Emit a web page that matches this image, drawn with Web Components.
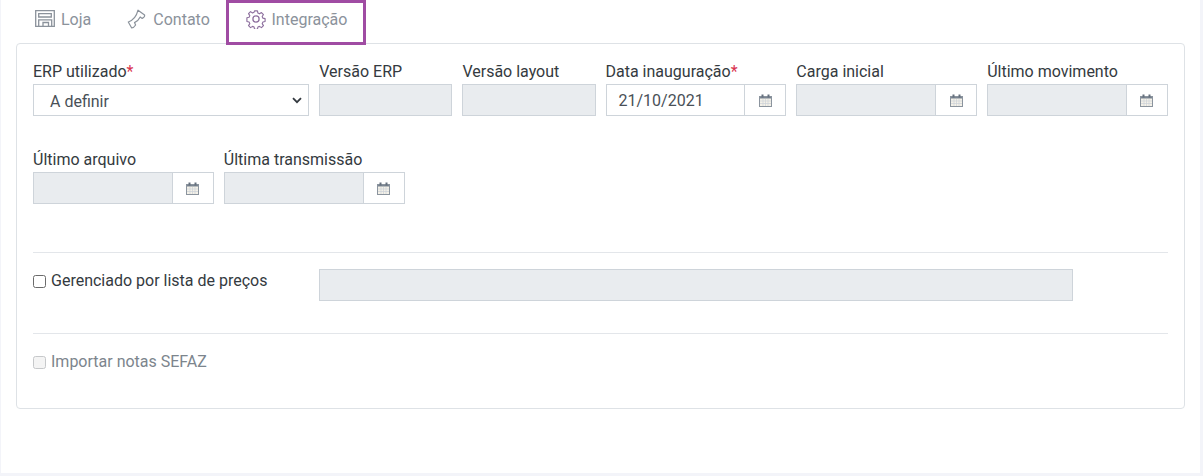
<!DOCTYPE html>
<html lang="pt-BR">
<head>
<meta charset="utf-8">
<title>Integração</title>
<style>
	html, body { margin: 0; height: 100% }
	body {
		background: #f3f4f9;
		font: 16px/20px Roboto, "Liberation Sans", sans-serif;
		color: #343a40;
	}
</style>
</head>
<body>
<app-panel>
	<tab-bar>
		<nav-tab icon="store">Loja</nav-tab>
		<nav-tab icon="phone">Contato</nav-tab>
		<nav-tab icon="gear" active>Integração</nav-tab>
	</tab-bar>
	<form-card>
		<form-row>
			<form-field span="25" required label="ERP utilizado"><select-input value="A definir"></select-input></form-field>
			<form-field span="12.5" label="Versão ERP"><text-input></text-input></form-field>
			<form-field span="12.5" label="Versão layout"><text-input></text-input></form-field>
			<form-field span="16.6667" required label="Data inauguração"><date-input value="21/10/2021" enabled></date-input></form-field>
			<form-field span="16.6667" label="Carga inicial"><date-input></date-input></form-field>
			<form-field span="16.6667" label="Último movimento"><date-input></date-input></form-field>
		</form-row>
		<form-row class="second">
			<form-field span="16.6667" label="Último arquivo"><date-input></date-input></form-field>
			<form-field span="16.6667" label="Última transmissão"><date-input></date-input></form-field>
		</form-row>
		<form-rule style="margin-top:48px"></form-rule>
		<form-row style="margin-top:16px">
			<form-field span="25"><check-box>Gerenciado por lista de preços</check-box></form-field>
			<form-field span="66.6667"><text-input></text-input></form-field>
		</form-row>
		<form-rule style="margin-top:32px"></form-rule>
		<form-row style="margin-top:16px">
			<form-field span="25"><check-box disabled>Importar notas SEFAZ</check-box></form-field>
		</form-row>
	</form-card>
</app-panel>

<script>
////////////////////////////////////////////////////////////////
const ICONS = {
	store: `<svg width="22" height="20" viewBox="0 0 22 20" fill="none" stroke="#8b929b" stroke-width="1.300">
		<path d="M1.700 1.700h18.600v15.600H1.700z"/>
		<path d="M4.700 4.700h12.600v3.300H4.700z"/>
		<path d="M4.700 17.300V10.800h13v6.500M9 17.300v-3.800h5.500v3.800" />
	</svg>`
,	phone: `<svg width="20" height="20" viewBox="0 0 20 20" fill="none" stroke="#8b929b" stroke-width="1.200" stroke-linejoin="round" stroke-linecap="round">
		<path d="M11 1.200L17.600 6c.3 1.200-.8 2.600-2.400 3.400L13.200 8C12 10.500 10.200 12.300 7.500 13.600L8.600 16C7.600 17.600 6.200 18.800 4.700 19L1.300 13C5.800 11.500 9.600 7 11 1.200z"/>
	</svg>`
,	gear: `<svg width="20" height="20" viewBox="0 0 20 20" fill="none" stroke="#8d6f9e" stroke-width="1.250" stroke-linejoin="round">
		<circle cx="10" cy="10" r="3.100"/>
		<path d="M8.400 1h3.200l.5 2.500 1.700.8 2.200-1.400 2.200 2.200-1.400 2.200.8 1.800 2.400.5v3.200l-2.400.5-.8 1.800 1.400 2.200-2.200 2.200-2.200-1.400-1.700.7-.5 2.500H8.400l-.5-2.500-1.700-.7-2.200 1.400-2.200-2.200 1.400-2.200-.8-1.800-2.400-.5V8.600l2.400-.5.8-1.800-1.400-2.200 2.200-2.200 2.200 1.400 1.700-.8z" transform="translate(.9 .9) scale(.91)"/>
	</svg>`
,	calendar: `<svg width="13" height="13" viewBox="0 0 13 13">
		<rect x=".5" y="2.500" width="12" height="10" fill="#f4f1e8" stroke="#8b949e"/>
		<rect x="1" y="3" width="11" height="1.500" fill="#7a8592"/>
		<rect x="2.500" y=".5" width="2" height="3" fill="#66717e"/>
		<rect x="8.500" y=".5" width="2" height="3" fill="#66717e"/>
		<path d="M1 7h11M1 9.500h11M4 5v7M6.500 5v7M9 5v7" stroke="#ccd1d9" stroke-width=".7"/>
	</svg>`
}

const Shadow = ( el, html ) => el.attachShadow( { mode: 'open' } ).innerHTML = html

class AppPanel extends HTMLElement {
	constructor() {
		super()
		Shadow( this, `
			<style>
				:host {
					display: block;
					box-sizing: border-box;
					width: 1199px;
					height: 473px;
					margin-left: 1px;
					padding: 0 15px;
					background: #fff;
				}
			</style>
			<slot></slot>
		` )
	}
}
customElements.define( 'app-panel', AppPanel )

class TabBar extends HTMLElement {
	constructor() {
		super()
		Shadow( this, `
			<style>
				:host { display: flex; height: 43px }
			</style>
			<slot></slot>
		` )
	}
}
customElements.define( 'tab-bar', TabBar )

class NavTab extends HTMLElement {
	constructor() {
		super()
		Shadow( this, `
			<style>
				:host {
					display: flex;
					align-items: center;
					gap: 5px;
					box-sizing: border-box;
					height: 40px;
					padding: 0 18px;
					color: #8b929b;
					position: relative;
				}
				:host([icon="phone"]) { padding: 0 16.7px 0 18px; gap: 6px }
				:host([active]) {
					height: 45px;
					padding: 0 16px 5px 17px;
					gap: 5px;
					border: 3px solid #a04ca3;
					background: #fff;
					z-index: 1;
				}
				.icon { display: block; margin-top: -2px }
				svg { display: block }
			</style>
			<span class="icon">${ ICONS[ this.getAttribute( 'icon' ) ] }</span>
			<slot></slot>
		` )
	}
}
customElements.define( 'nav-tab', NavTab )

class FormCard extends HTMLElement {
	constructor() {
		super()
		Shadow( this, `
			<style>
				:host {
					display: block;
					box-sizing: border-box;
					height: 366px;
					padding: 16px;
					border: 1px solid #dee2e6;
					border-radius: 4px;
					background: #fff;
				}
			</style>
			<slot></slot>
		` )
	}
}
customElements.define( 'form-card', FormCard )

class FormRow extends HTMLElement {
	constructor() {
		super()
		Shadow( this, `
			<style>
				:host { display: flex; flex-wrap: wrap; margin: 0 -5px }
				:host(.second) { margin-top: 32px }
			</style>
			<slot></slot>
		` )
	}
}
customElements.define( 'form-row', FormRow )

class FormRule extends HTMLElement {
	constructor() {
		super()
		Shadow( this, `<style>:host { display: block; height: 1px; background: #e3e6ea }</style>` )
	}
}
customElements.define( 'form-rule', FormRule )

class FormField extends HTMLElement {
	constructor() {
		super()
		const label = this.getAttribute( 'label' )
		const star = this.hasAttribute( 'required' ) ? '<b>*</b>' : ''
		Shadow( this, `
			<style>
				:host {
					display: block;
					box-sizing: border-box;
					flex: 0 0 ${ this.getAttribute( 'span' ) }%;
					padding: 0 5px;
				}
				label { display: block; height: 24px; line-height: 24px; color: #343a40; white-space: nowrap }
				b { font-weight: 400; color: #d9324e }
			</style>
			${ label ? `<label>${ label }${ star }</label>` : '' }
			<slot></slot>
		` )
	}
}
customElements.define( 'form-field', FormField )

const BOX = `
	box-sizing: border-box;
	height: 32px;
	border: 1px solid #ced4da;
	font: 16px/32px Roboto, "Liberation Sans", sans-serif;
	color: #495057;
`

class TextInput extends HTMLElement {
	constructor() {
		super()
		Shadow( this, `
			<style>
				:host { display: block; ${ BOX } background: #e9ecef }
			</style>
		` )
	}
}
customElements.define( 'text-input', TextInput )

class SelectInput extends HTMLElement {
	constructor() {
		super()
		Shadow( this, `
			<style>
				:host { display: block; ${ BOX } background: #fff }
				div { display: flex; align-items: center; justify-content: space-between; height: 100%; padding: 0 6px 0 16px }
				span { padding-top: 4px; line-height: 30px }
				svg { display: block }
			</style>
			<div>
				<span>${ this.getAttribute( 'value' ) }</span>
				<svg width="10" height="7" viewBox="0 0 10 7" fill="none" stroke="#343a40" stroke-width="1.800"><path d="M1 1.200l4 4 4-4"/></svg>
			</div>
		` )
	}
}
customElements.define( 'select-input', SelectInput )

class DateInput extends HTMLElement {
	constructor() {
		super()
		const value = this.getAttribute( 'value' ) || ''
		Shadow( this, `
			<style>
				:host { display: flex; ${ BOX } background: #fff }
				.value {
					flex: 1;
					padding-left: 12px;
					background: ${ this.hasAttribute( 'enabled' ) ? '#fff' : '#e9ecef' };
				}
				.addon {
					flex: 0 0 40px;
					display: flex;
					align-items: center;
					justify-content: center;
					border-left: 1px solid #ced4da;
				}
				svg { display: block }
			</style>
			<div class="value">${ value }</div>
			<div class="addon">${ ICONS.calendar }</div>
		` )
	}
}
customElements.define( 'date-input', DateInput )

class CheckBox extends HTMLElement {
	constructor() {
		super()
		const off = this.hasAttribute( 'disabled' )
		Shadow( this, `
			<style>
				:host {
					display: flex;
					align-items: flex-start;
					gap: 5px;
					height: 32px;
					color: ${ off ? '#7c858d' : '#343a40' };
				}
				i {
					flex: none;
					box-sizing: border-box;
					width: 13px;
					height: 13px;
					margin-top: 6px;
					border: 1px solid ${ off ? '#c6c8ca' : '#6b6b6b' };
					border-radius: 2.500px;
					background: ${ off ? '#f4f4f4' : '#fff' };
				}
				span { line-height: 24px; white-space: nowrap }
			</style>
			<i></i><span><slot></slot></span>
		` )
	}
}
customElements.define( 'check-box', CheckBox )
</script>
</body>
</html>
